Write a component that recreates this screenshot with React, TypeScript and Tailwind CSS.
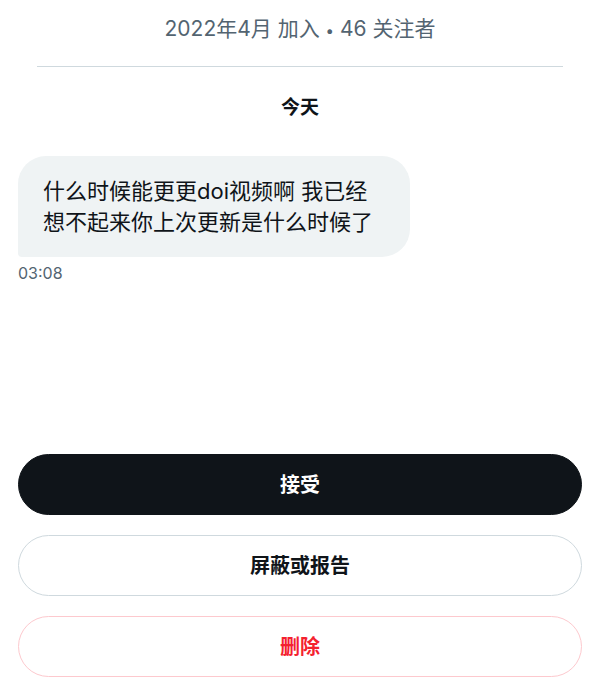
const font = "font-['Inter','Noto_Sans_CJK_SC',sans-serif]";

type ActionButtonProps = {
  label: string;
  variant: "primary" | "outline" | "danger";
};

function ActionButton({ label, variant }: ActionButtonProps) {
  const styles = {
    primary: "bg-[#0f1419] text-white border-[#0f1419]",
    outline: "bg-white text-[#0f1419] border-[#cfd9de]",
    danger: "bg-white text-[#f4212e] border-[#fdc9ce]",
  }[variant];
  return (
    <button
      className={`flex h-[61px] w-full items-center justify-center rounded-full border text-[20px] font-bold ${styles}`}
    >
      {label}
    </button>
  );
}

export default function App() {
  return (
    <div className={`flex h-[680px] w-[600px] flex-col bg-white ${font}`}>
      <p className="h-[44px] pt-[14px] text-center text-[21px] leading-[30px] text-[#536471]">
        2022年4月 加入 <span className="align-middle text-[15px] leading-none">•</span> 46 关注者
      </p>
      <div className="mx-[37px] mt-[22px] h-px bg-[#cfd9de]" />
      <p className="mt-[28px] text-center text-[19px] font-bold leading-[26px] text-[#0f1419]">
        今天
      </p>

      <div className="mt-[35px] px-[18px]">
        <div className="w-[392px] rounded-[28px] rounded-bl-[4px] bg-[#eff3f4] pb-[19px] pl-[25px] pr-[20px] pt-[20px] text-[22px] leading-[31px] text-[#0f1419]">
          什么时候能更更doi视频啊 我已经
          <br />
          想不起来你上次更新是什么时候了
        </div>
        <p className="mt-[5px] text-[16px] leading-[22px] text-[#536471]">03:08</p>
      </div>

      <div className="mt-auto flex flex-col gap-[20px] px-[18px] pb-[3px]">
        <ActionButton label="接受" variant="primary" />
        <ActionButton label="屏蔽或报告" variant="outline" />
        <ActionButton label="删除" variant="danger" />
      </div>
    </div>
  );
}
